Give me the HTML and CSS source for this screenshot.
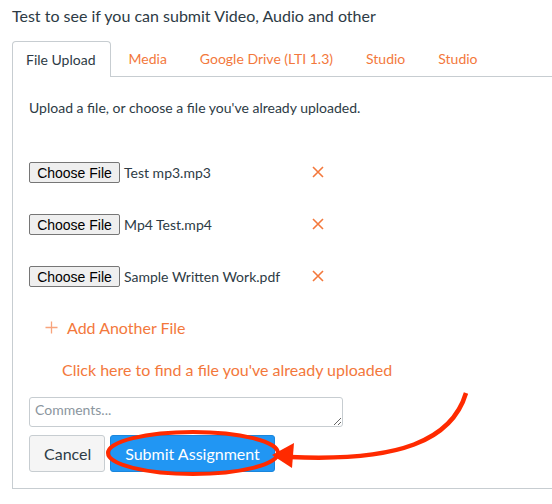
FILE: index.html
```html
<!DOCTYPE html>
<html lang="en">
<head>
<meta charset="utf-8">
<title>Submit Assignment</title>
<link rel="stylesheet" href="styles.css">
</head>
<body>
<div class="page">
  <h1 class="title">Test to see if you can submit Video, Audio and other</h1>
  <div class="tabs">
    <div class="tab active">File Upload</div>
    <div class="tab">Media</div>
    <div class="tab">Google Drive (LTI 1.3)</div>
    <div class="tab">Studio</div>
    <div class="tab">Studio</div>
  </div>
  <div class="panel">
    <p class="intro">Upload a file, or choose a file you've already uploaded.</p>
    <div class="files">
      <div class="file-row">
        <div class="picker"><button class="choose">Choose File</button><span class="fname">Test mp3.mp3</span></div>
        <svg class="remove" width="12" height="12" viewBox="0 0 12 12"><path d="M1 1L11 11M11 1L1 11" stroke="#f3783c" stroke-width="1.6" fill="none"/></svg>
      </div>
      <div class="file-row">
        <div class="picker"><button class="choose">Choose File</button><span class="fname">Mp4 Test.mp4</span></div>
        <svg class="remove" width="12" height="12" viewBox="0 0 12 12"><path d="M1 1L11 11M11 1L1 11" stroke="#f3783c" stroke-width="1.6" fill="none"/></svg>
      </div>
      <div class="file-row">
        <div class="picker"><button class="choose">Choose File</button><span class="fname">Sample Written Work.pdf</span></div>
        <svg class="remove" width="12" height="12" viewBox="0 0 12 12"><path d="M1 1L11 11M11 1L1 11" stroke="#f3783c" stroke-width="1.6" fill="none"/></svg>
      </div>
    </div>
    <div class="add-file">
      <svg class="plus" width="13" height="13" viewBox="0 0 13 13"><path d="M6.5 0.5V12.5M0.5 6.5H12.5" stroke="#f8a47c" stroke-width="1.3" fill="none"/></svg>
      <span>Add Another File</span>
    </div>
    <div class="find-link">Click here to find a file you've already uploaded</div>
    <textarea class="comments" placeholder="Comments..."></textarea>
    <div class="actions">
      <button class="btn cancel">Cancel</button>
      <button class="btn submit">Submit Assignment</button>
    </div>
  </div>
</div>
<svg class="annot" width="552" height="504" viewBox="0 0 552 504">
  <ellipse cx="193" cy="453" rx="85" ry="21" fill="none" stroke="#ff2a00" stroke-width="4"/>
  <path d="M466 393 C 452 440 400 462 290 457" fill="none" stroke="#ff2a00" stroke-width="4.5"/>
  <polygon points="272,455 294,443 292,468" fill="#ff2a00"/>
</svg>
</body>
</html>
```
FILE: styles.css
```css
html, body {
  margin: 0;
  padding: 0;
  background: #ffffff;
}
body {
  width: 552px;
  height: 504px;
  overflow: hidden;
  position: relative;
  font-family: Lato, "Noto Sans", sans-serif;
  color: #2d3b45;
}
.page {
  padding-left: 12px;
}
.title {
  margin: 0;
  padding-top: 4px;
  font-size: 16px;
  font-weight: 400;
  line-height: 24px;
  height: 37px;
}
.tabs {
  display: flex;
  align-items: stretch;
  height: 36px;
  border-bottom: 1px solid #c7cdd1;
  box-sizing: border-box;
}
.tab {
  display: flex;
  align-items: center;
  padding: 0 16px;
  font-size: 14px;
  color: #f3783c;
  margin-right: 1px;
}
.tab.active {
  color: #2d3b45;
  border: 1px solid #c7cdd1;
  border-bottom: none;
  border-radius: 4px 4px 0 0;
  background: #fff;
  margin-bottom: -1px;
  padding: 0 14px 0 13px;
  margin-right: 2px;
}
.panel {
  border-left: 1px solid #c7cdd1;
  border-bottom: 1px solid #c7cdd1;
  padding-left: 16px;
  height: 412px;
  box-sizing: border-box;
  margin-top: 0;
}
.intro {
  margin: 0;
  padding-top: 21px;
  font-size: 14px;
  line-height: 20px;
}
.files {
  display: flex;
  flex-direction: column;
  gap: 31px;
  margin-top: 44px;
}
.file-row {
  display: flex;
  align-items: center;
  height: 21px;
}
.picker {
  display: flex;
  align-items: center;
  width: 283px;
}
.choose {
  font-family: "Liberation Sans", Arial, sans-serif;
  font-size: 14px;
  height: 21px;
  width: 91px;
  padding: 0;
  background: #efefef;
  border: 1px solid #767676;
  border-radius: 2px;
  color: #000;
}
.fname {
  margin-left: 4px;
  font-size: 14px;
  color: #2d3b45;
}
.remove {
  display: block;
  margin-top: -2px;
}
.add-file {
  display: flex;
  align-items: center;
  margin-top: 29px;
  margin-left: 16px;
  height: 22px;
  font-size: 16px;
  color: #f3783c;
}
.plus {
  margin-right: 9px;
}
.find-link {
  margin-top: 21px;
  margin-left: 33px;
  font-size: 16px;
  line-height: 22px;
  color: #f3783c;
}
.comments {
  display: block;
  margin-top: 16px;
  width: 314px;
  height: 30px;
  box-sizing: border-box;
  border: 1px solid #c7cdd1;
  border-radius: 3px;
  padding: 3px 5px;
  font-family: Lato, sans-serif;
  font-size: 14px;
  color: #2d3b45;
  resize: vertical;
}
.comments::placeholder {
  color: #8b969e;
}
.actions {
  display: flex;
  gap: 5px;
  margin-top: 8px;
}
.btn {
  height: 37px;
  border-radius: 3px;
  font-family: Lato, sans-serif;
  font-size: 16px;
  padding: 0 14px;
}
.cancel {
  width: 76px;
  background: #f5f5f5;
  border: 1px solid #c7cdd1;
  color: #2d3b45;
}
.submit {
  width: 165px;
  background: #2196f3;
  border: 1px solid #1a86dc;
  color: #ffffff;
}
.annot {
  position: absolute;
  left: 0;
  top: 0;
  pointer-events: none;
}
```
